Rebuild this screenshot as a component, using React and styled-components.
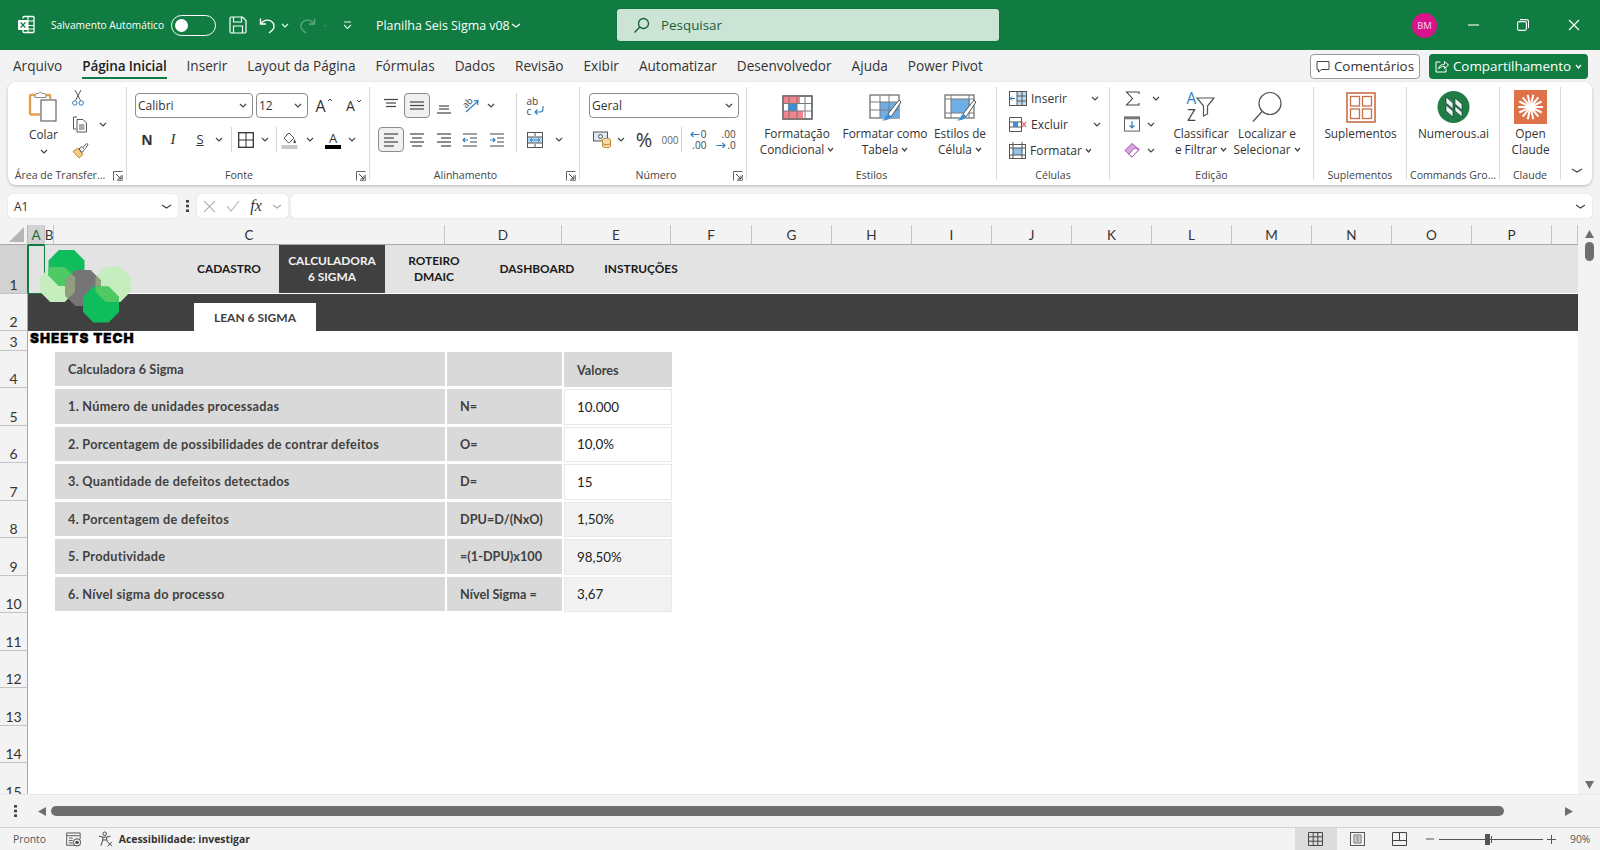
import styled, { createGlobalStyle } from 'styled-components';
import { Fragment } from 'react';

const GlobalStyle = createGlobalStyle`
  html, body { margin: 0; padding: 0; height: 100%; overflow: hidden; background: #f3f3f3; }
  body { font-family: "Open Sans", "Noto Sans", sans-serif; color: #333; }
  * { box-sizing: border-box; }
`;

const Page = styled.div`
  width: 1600px;
  height: 850px;
  display: flex;
  flex-direction: column;
  overflow: hidden;
`;

/* title bar */
const TitleBar = styled.div`
  height: 50px;
  background: #107c41;
  color: #fff;
  display: flex;
  align-items: center;
  flex: none;
`;
const Slot = styled.div`
  width: ${p => p.$w}px;
  flex: none;
  display: flex;
  align-items: center;
  justify-content: center;
  margin-left: ${p => p.$ml || 0}px;
`;
const AutoSave = styled.span`
  width: 120px;
  flex: none;
  font-size: 10.2px;
  white-space: nowrap;
`;
const Toggle = styled.div`
  width: 45px;
  height: 21px;
  flex: none;
  border: 1.5px solid #fff;
  border-radius: 11px;
  padding: 3px;
  display: flex;
  &::before {
    content: '';
    width: 13px;
    height: 13px;
    border-radius: 50%;
    background: #fff;
  }
`;
const DocName = styled.div`
  width: 131px;
  flex: none;
  font-size: 12.4px;
  white-space: nowrap;
`;
const SearchBox = styled.div`
  width: 382px;
  height: 32px;
  flex: none;
  background: #cce4d6;
  border-radius: 3px;
  display: flex;
  align-items: center;
  gap: 11px;
  padding-left: 16px;
  color: #1d5c3a;
  font-size: 13.4px;
  box-shadow: 0 0 1px rgba(0, 0, 0, 0.4);
`;
const Avatar = styled.div`
  width: 25px;
  height: 25px;
  flex: none;
  border-radius: 50%;
  background: #d9138c;
  color: #f7d3ea;
  font-size: 9.5px;
  display: flex;
  align-items: center;
  justify-content: center;
`;

/* tab row */
const TabRow = styled.div`
  height: 32px;
  flex: none;
  display: flex;
  align-items: center;
  padding: 0 12px 0 13px;
`;
const Tab = styled.div`
  margin: 0 20px 3px 0;
  height: 29px;
  padding-top: 4px;
  flex: none;
  display: flex;
  align-items: center;
  font-size: 13.6px;
  white-space: nowrap;
  font-weight: ${p => (p.$active ? 600 : 400)};
  letter-spacing: ${p => (p.$active ? '-0.15px' : '0')};
  color: ${p => (p.$active ? '#222' : '#333')};
  border-bottom: 2px solid ${p => (p.$active ? '#107c41' : 'transparent')};
`;
const TabActions = styled.div`
  margin-left: auto;
  display: flex;
  gap: 9px;
`;
const CommentButton = styled.div`
  width: 110px;
  height: 25px;
  border: 1px solid #9a9a9a;
  border-radius: 4px;
  background: #fff;
  display: flex;
  align-items: center;
  justify-content: center;
  gap: 4px;
  font-size: 13.4px;
`;
const ShareButton = styled.div`
  width: 159px;
  height: 25px;
  border-radius: 4px;
  background: #107c41;
  color: #fff;
  display: flex;
  align-items: center;
  justify-content: center;
  gap: 4px;
  font-size: 13.4px;
`;

/* ribbon */
const Ribbon = styled.div`
  height: 103px;
  margin: 0 8px;
  flex: none;
  background: #fff;
  border-radius: 8px;
  box-shadow: 0 1px 3px rgba(0, 0, 0, 0.25);
  display: flex;
`;
const Group = styled.div`
  width: ${p => p.$w}px;
  flex: none;
  margin: 5px 0;
  padding-top: 6px;
  display: flex;
  flex-direction: column;
  border-right: ${p => (p.$last ? 'none' : '1px solid #dcdcdc')};
`;
const GroupBody = styled.div`
  flex: 1;
  min-height: 0;
  display: flex;
  padding-left: ${p => p.$pad || 0}px;
`;
const Stack = styled.div`
  display: flex;
  flex-direction: column;
  gap: ${p => p.$gap ?? 9}px;
  margin-top: ${p => p.$top || 0}px;
  margin-left: ${p => p.$left || 0}px;
`;
const ToolRow = styled.div`
  display: flex;
  align-items: center;
  height: ${p => p.$h || 25}px;
`;
const GroupLabel = styled.div`
  height: 18px;
  flex: none;
  margin-bottom: -4px;
  display: flex;
  align-items: center;
  justify-content: center;
  font-size: 10.6px;
  color: #444;
  white-space: nowrap;
  position: relative;
`;
const LabelText = styled.span`
  margin-right: ${p => p.$mr || 0}px;
`;
const Launcher = styled.span`
  position: absolute;
  right: 3px;
  top: 5px;
  display: flex;
`;
const CollapseSlot = styled.div`
  height: 18px;
  margin-bottom: 1px;
  display: flex;
  align-items: center;
  justify-content: center;
`;
const Select = styled.div`
  width: ${p => p.$w}px;
  height: 25px;
  flex: none;
  border: 1px solid #8c8c8c;
  border-radius: 4px;
  font-size: 12px;
  display: flex;
  align-items: center;
  justify-content: space-between;
  padding: 0 5px 0 2px;
  color: #333;
`;
const Pressed = styled.div`
  width: ${p => p.$w}px;
  height: 25px;
  flex: none;
  background: #f0f0f0;
  border: 1px solid #8c8c8c;
  border-radius: 4px;
  display: flex;
  align-items: center;
  justify-content: center;
`;
const BigButton = styled.div`
  width: ${p => p.$w}px;
  flex: none;
  margin-left: ${p => p.$ml || 0}px;
  display: flex;
  flex-direction: column;
  align-items: center;
  font-size: 11.8px;
  line-height: 16px;
  color: #333;
  white-space: nowrap;
  text-align: center;
`;
const BigIcon = styled.div`
  height: 32px;
  margin-top: -2px;
  display: flex;
  align-items: center;
  justify-content: center;
  flex: none;
`;
const PasteSlot = styled(BigIcon)`
  height: 33px;
  margin-top: -3px;
`;
const BigText = styled.div`
  margin-top: ${p => p.$top ?? 2}px;
  display: flex;
`;
const ChevronLine = styled.span`
  display: inline-flex;
  align-items: center;
  gap: 3px;
`;
const CellAction = styled.div`
  height: 26px;
  display: flex;
  align-items: center;
  font-size: 12px;
  white-space: nowrap;
`;
const CellName = styled.span`
  width: ${p => (p.$w ? `${p.$w}px` : 'auto')};
  margin: 0 ${p => (p.$w ? 0 : 3)}px 0 4px;
`;
const Mark = styled.span`
  font-family: ${p => (p.$serif ? '"Liberation Serif", serif' : '"Open Sans", sans-serif')};
  font-weight: ${p => (p.$bold ? 700 : 400)};
  font-style: ${p => (p.$italic ? 'italic' : 'normal')};
  font-size: ${p => p.$size || 14}px;
  text-decoration: ${p => (p.$under ? 'underline' : 'none')};
  color: ${p => p.$color || '#333'};
  line-height: 1;
`;
const VSep = styled.div`
  width: 1px;
  height: ${p => p.$h || 25}px;
  background: #d4d4d4;
  flex: none;
  margin: 0 ${p => p.$mr || 0}px 0 ${p => p.$ml || 0}px;
`;
const GrowMark = styled.div`
  display: flex;
  align-items: flex-start;
  gap: 1px;
`;
const ColorMark = styled.div`
  width: 16px;
  display: flex;
  flex-direction: column;
  align-items: center;
  font-size: 13px;
  line-height: 14px;
  color: #333;
  &::after {
    content: '';
    width: 16px;
    height: 4px;
    background: #000;
  }
`;
const Mini = styled.div`
  display: flex;
  flex-direction: column;
  align-items: ${p => p.$align || 'flex-start'};
  gap: ${p => p.$gap || 0}px;
  font-size: ${p => p.$size || 10}px;
  line-height: ${p => p.$lh || 10}px;
  color: #444;
`;
const MiniLine = styled.div`
  display: flex;
  align-items: center;
  gap: 1px;
`;
const Blue = styled.span`
  color: #2f7fc1;
`;
const TiltMark = styled.span`
  display: block;
  font-size: 9px;
  line-height: 9px;
  color: #444;
  transform: rotate(-45deg);
  margin-right: -7px;
  margin-bottom: 6px;
`;
const WrapBox = styled.div`
  position: relative;
  width: 17px;
  height: 20px;
`;
const WrapArrow = styled.span`
  position: absolute;
  right: 0;
  bottom: 1px;
  display: flex;
`;
const SortBox = styled.div`
  display: flex;
  align-items: center;
`;
const SortLetters = styled.div`
  display: flex;
  flex-direction: column;
  font-size: 15.5px;
  line-height: 17px;
  color: #444;
`;

/* formula bar */
const FormulaBar = styled.div`
  height: 24px;
  margin: 9px 8px 7px;
  flex: none;
  display: flex;
  align-items: stretch;
`;
const InputBox = styled.div`
  background: #fff;
  border-radius: 4px;
  box-shadow: 0 0 1px rgba(0, 0, 0, 0.3);
  display: flex;
  align-items: center;
  font-size: 12px;
  width: ${p => (p.$w ? `${p.$w}px` : 'auto')};
  flex: ${p => (p.$w ? 'none' : 1)};
  padding: 0 6px;
  justify-content: space-between;
`;
const FxIcons = styled.div`
  display: flex;
  align-items: center;
  justify-content: space-between;
  width: 100%;
`;

/* sheet */
const SheetArea = styled.div`
  height: 569px;
  flex: none;
  display: flex;
  overflow: hidden;
`;
const SheetGrid = styled.div`
  width: 1578px;
  flex: none;
  position: relative;
  background: #fff;
  display: grid;
  grid-template-columns: 28px 17px 9px 391px 117px 109px 81px repeat(10, 80px) 26px;
  grid-template-rows: 20px 49px 37px 20px 37px repeat(11, 37.5px);
  overflow: hidden;
`;
const Corner = styled.div`
  grid-column: 1;
  grid-row: 1;
  background: #f3f3f3;
  border-right: 1px solid #b8b8b8;
  border-bottom: 1px solid #a8a8a8;
  display: flex;
  align-items: flex-end;
  justify-content: flex-end;
  padding: 2px 3px;
`;
const ColHead = styled.div`
  grid-row: 1;
  grid-column: ${p => p.$col};
  background: ${p => (p.$selected ? '#d2d2d2' : '#f3f3f3')};
  border-right: 1px solid #c4c4c4;
  border-bottom: 1px solid ${p => (p.$selected ? '#107c41' : '#a8a8a8')};
  display: flex;
  align-items: center;
  justify-content: center;
  font-family: Lato, sans-serif;
  font-size: 13.5px;
  color: ${p => (p.$selected ? '#17693c' : '#333')};
`;
const RowHead = styled.div`
  grid-column: 1;
  grid-row: ${p => p.$row};
  background: ${p => (p.$selected ? '#d2d2d2' : '#f3f3f3')};
  border-right: 1px solid ${p => (p.$selected ? '#107c41' : '#a8a8a8')};
  border-bottom: 1px solid #c4c4c4;
  display: flex;
  align-items: flex-end;
  justify-content: center;
  font-family: Lato, sans-serif;
  font-size: 14px;
  line-height: 16px;
  color: #333;
`;
const NavBand = styled.div`
  grid-column: 2 / -1;
  grid-row: 2;
  background: #e3e3e3;
  border-bottom: 1px solid #fff;
  display: flex;
  padding-left: 151px;
`;
const NavTab = styled.div`
  width: ${p => p.$w}px;
  flex: none;
  display: flex;
  align-items: center;
  justify-content: center;
  text-align: center;
  font-family: Lato, sans-serif;
  font-weight: 700;
  font-size: 11.9px;
  line-height: 16.5px;
  background: ${p => (p.$active ? '#404040' : 'transparent')};
  color: ${p => (p.$active ? '#f2f2f2' : '#1a1a1a')};
`;
const SubBand = styled.div`
  grid-column: 2 / -1;
  grid-row: 3;
  background: #404040;
  display: flex;
  align-items: flex-end;
  padding-left: 166px;
`;
const SubTab = styled.div`
  width: 122px;
  height: 28px;
  background: #fff;
  color: #404040;
  display: flex;
  align-items: center;
  justify-content: center;
  font-family: Lato, sans-serif;
  font-weight: 700;
  font-size: 12px;
`;
const SelectedCell = styled.div`
  grid-column: 2;
  grid-row: 2;
  border: 1.5px solid #107c41;
  z-index: 1;
`;
const Brand = styled.div`
  grid-column: 2 / 5;
  grid-row: 4;
  padding-left: 2px;
  font-family: Inter, sans-serif;
  font-weight: 900;
  font-size: 13.4px;
  line-height: 15px;
  letter-spacing: 1px;
  color: #000;
  -webkit-text-stroke: 0.4px #000;
  z-index: 2;
`;
const Logo = styled.svg`
  position: absolute;
  left: 0;
  top: 0;
  z-index: 2;
`;
const DataCell = styled.div`
  grid-row: ${p => p.$row};
  grid-column: ${p => p.$col};
  margin: ${p => (p.$col === 6 ? '1px -1px 1px 2px' : p.$col === 5 ? '1px 0 2px 2px' : '1px 0 2px 1px')};
  padding-left: ${p => p.$pad}px;
  display: flex;
  align-items: center;
  font-family: Lato, sans-serif;
  font-weight: ${p => (p.$value ? 400 : 700)};
  font-size: ${p => (p.$value ? 13.4 : 12.7)}px;
  letter-spacing: ${p => p.$track || 0}px;
  color: ${p => (p.$value ? '#222' : '#404040')};
  white-space: nowrap;
  background: ${p => p.$bg};
  border: ${p => (p.$framed ? '1px solid #e8e8e8' : 'none')};
`;
const VScroll = styled.div`
  flex: 1;
  background: #f3f3f3;
  display: flex;
  flex-direction: column;
  align-items: center;
  padding-top: 5px;
`;
const VThumb = styled.div`
  width: 9px;
  height: 19px;
  margin-top: 3px;
  background: #6e6e6e;
  border-radius: 5px;
`;
const DownArrow = styled.div`
  margin-top: auto;
  margin-bottom: 4px;
  display: flex;
`;
const HScrollBar = styled.div`
  height: 33px;
  flex: none;
  display: flex;
  align-items: center;
  border-top: 1px solid #e8e8e8;
`;
const HThumb = styled.div`
  width: 1453px;
  height: 10px;
  margin-left: -3px;
  background: #6e6e6e;
  border-radius: 5px;
  flex: none;
`;

/* status bar */
const StatusBar = styled.div`
  height: 23px;
  flex: none;
  border-top: 1px solid #d4d4d4;
  display: flex;
  align-items: center;
  font-size: 10.4px;
  color: #444;
`;
const StatusText = styled.span`
  font-weight: ${p => (p.$bold ? 700 : 400)};
  color: ${p => (p.$bold ? '#333' : '#555')};
  white-space: nowrap;
  width: ${p => (p.$w ? `${p.$w}px` : 'auto')};
  flex: none;
`;
const ViewButton = styled.div`
  width: ${p => p.$w}px;
  height: 22px;
  flex: none;
  display: flex;
  align-items: center;
  justify-content: center;
  background: ${p => (p.$active ? '#dcdcdc' : 'transparent')};
`;
const ZoomTrack = styled.div`
  width: 104px;
  height: 1px;
  flex: none;
  background: #555;
  position: relative;
`;
const ZoomThumb = styled.div`
  position: absolute;
  left: 46px;
  top: -5px;
  width: 5px;
  height: 11px;
  background: #555;
`;
const ZoomTick = styled.div`
  position: absolute;
  left: 52px;
  top: -3px;
  width: 1px;
  height: 7px;
  background: #555;
`;

/* icons */
const Svg = ({ w, h, children, ...rest }) => (
  <svg width={w} height={h} viewBox={`0 0 ${w} ${h}`} fill="none" {...rest}>{children}</svg>
);
const Chev = ({ color = '#444', w = 8 }) => (
  <Svg w={w} h={5}><path d={`M1 1l${w / 2 - 1} 3 ${w / 2 - 1}-3`} stroke={color} strokeWidth="1.2" /></Svg>
);
const LauncherIcon = () => (
  <Svg w={10} h={10}>
    <path d="M0.5 9.5v-9h9" stroke="#666" />
    <path d="M3 3l5 5M8 4.5V8H4.5" stroke="#3d3d3d" />
    <path d="M4 9.5h5.5V4" stroke="#888" />
  </Svg>
);
const ExcelIcon = () => (
  <Svg w={18} h={20}>
    <path d="M6 3.5V2.5a1 1 0 0 1 1-1h9a1 1 0 0 1 1 1v14a1 1 0 0 1-1 1H7a1 1 0 0 1-1-1v-2" stroke="#fff" strokeWidth="1.3" />
    <path d="M11 1.5v16M6 6h11M11 10.5h6M11 14h6" stroke="#fff" strokeWidth="1.1" />
    <rect x="1" y="5" width="10" height="10" rx="1" fill="#fff" />
    <path d="M3.6 7.4l4.8 5.2M8.4 7.4l-4.8 5.2" stroke="#107c41" strokeWidth="1.4" />
  </Svg>
);
const SaveIcon = () => (
  <Svg w={18} h={18}>
    <path d="M1 2.2A1.2 1.2 0 0 1 2.2 1h11.3L17 4.5v11.3a1.2 1.2 0 0 1-1.2 1.2H2.2A1.2 1.2 0 0 1 1 15.8z" stroke="#fff" strokeWidth="1.2" />
    <path d="M4.5 1v5h8V1M4.5 17v-7h9v7" stroke="#fff" strokeWidth="1.2" />
  </Svg>
);
const UndoIcon = ({ color = '#fff', flip }) => (
  <Svg w={17} h={17}>
    <g transform={flip ? 'translate(17 0) scale(-1 1)' : undefined}>
      <path d="M1.5 1.5v5.5h5.5" stroke={color} strokeWidth="1.4" />
      <path d="M1.8 6.8C4 3.5 8.5 2 12 4c3.5 2.2 4 6.5 1.5 9l-3.5 3" stroke={color} strokeWidth="1.4" />
    </g>
  </Svg>
);
const CustomizeIcon = () => (
  <Svg w={9} h={9}>
    <path d="M1 1h7" stroke="#dfe" strokeWidth="1" />
    <path d="M1 4l3.5 3.5L8 4" stroke="#dfe" strokeWidth="1.1" />
  </Svg>
);
const SearchIcon = () => (
  <Svg w={17} h={17}>
    <circle cx="10.5" cy="6.5" r="5" stroke="#1d5c3a" strokeWidth="1.3" />
    <path d="M6.8 10L1.5 15.5" stroke="#1d5c3a" strokeWidth="1.4" />
  </Svg>
);
const CommentIcon = () => (
  <Svg w={14} h={13}>
    <path d="M1 1.5h12v8H5.5L2.5 12V9.5H1z" stroke="#444" />
  </Svg>
);
const ShareIcon = () => (
  <Svg w={14} h={13}>
    <path d="M5.5 2H1v10h10V8.5" stroke="#fff" />
    <path d="M3.5 9C4 6 6.5 4.2 9.5 4.2V1.5L13.5 5l-4 3.5V6.3C7 6.3 5 7 3.5 9z" stroke="#fff" />
  </Svg>
);
const PasteIcon = () => (
  <Svg w={32} h={33}>
    <path d="M12 24.5H3.2A1.2 1.2 0 0 1 2 23.3V6.2A1.2 1.2 0 0 1 3.2 5H21a1.2 1.2 0 0 1 1.2 1.2V9" stroke="#e2a04c" strokeWidth="2.4" />
    <path d="M7 5l1-1.5h2.5C11 1.5 13.5 1.5 14 3.5h2.5L18 5v2.5H7z" fill="#fff" stroke="#8a8a8a" />
    <rect x="13" y="10" width="15" height="21" fill="#fff" stroke="#666" strokeWidth="1.2" />
  </Svg>
);
const CutIcon = () => (
  <Svg w={12} h={18}>
    <path d="M3 1l5.5 10.5M9 1L3.5 11.5" stroke="#555" />
    <circle cx="2.8" cy="14" r="2.2" stroke="#3b78b5" />
    <circle cx="9.2" cy="14" r="2.2" stroke="#3b78b5" />
  </Svg>
);
const CopyIcon = () => (
  <Svg w={16} h={17}>
    <path d="M5 1H1.5v12H4" stroke="#555" />
    <path d="M5 3.5h6l3.5 3.5V16H5z" stroke="#555" />
    <path d="M7 9h5.5M7 11h5.5M7 13h5.5" stroke="#555" />
  </Svg>
);
const BrushIcon = () => (
  <Svg w={17} h={17}>
    <path d="M1 9.5l5-3.5 5 6.5-4 3.5z" fill="#f2c987" stroke="#c98a30" />
    <path d="M7 7l3-2.5 2.5 3-2.5 3z" stroke="#555" />
    <path d="M11.5 5l3-3.5 1.5 1-2.5 4" stroke="#555" />
  </Svg>
);
const SmallCaret = ({ down }) => (
  <Svg w={6} h={4}><path d={down ? 'M1 1l2 2 2-2' : 'M1 3l2-2 2 2'} stroke="#444" /></Svg>
);
const BorderIcon = () => (
  <Svg w={16} h={16}>
    <rect x="0.7" y="0.7" width="14.6" height="14.6" stroke="#333" strokeWidth="1.3" />
    <path d="M8 1v14M1 8h14" stroke="#333" />
  </Svg>
);
const FillIcon = () => (
  <Svg w={17} h={18}>
    <path d="M3 7l5-5 5 5-4.5 4.5a1 1 0 0 1-1.2 0z" stroke="#555" />
    <path d="M8 2L5 4.5" stroke="#555" />
    <path d="M13.5 8l1.5 3a1.2 1.2 0 0 1-2.6 0z" fill="#555" />
    <rect x="0.5" y="14" width="16" height="4" fill="#c8c8c8" />
  </Svg>
);
const Lines = ({ rows, w = 16 }) => (
  <Svg w={w} h={16}>
    {rows.map((r, i) => (
      <path key={i} d={`M${r[0]} ${r[2]}H${r[1]}`} stroke="#444" strokeWidth="1.2" />
    ))}
  </Svg>
);
const AlignTop = () => <Lines rows={[[1, 15, 1.5], [3, 13, 5], [3, 13, 8.5]]} />;
const AlignMid = () => <Lines rows={[[1, 15, 4], [1, 15, 7.5], [1, 15, 11]]} />;
const AlignBot = () => <Lines rows={[[3, 13, 8], [3, 13, 11], [1, 15, 15]]} />;
const AlignLeft = () => <Lines rows={[[1, 15, 2], [1, 11, 6], [1, 15, 10], [1, 11, 14]]} />;
const AlignCenter = () => <Lines rows={[[1, 15, 2], [3, 13, 6], [1, 15, 10], [3, 13, 14]]} />;
const AlignRight = () => <Lines rows={[[1, 15, 2], [5, 15, 6], [1, 15, 10], [5, 15, 14]]} />;
const IndentIcon = ({ back }) => (
  <Svg w={16} h={16}>
    <path d="M1 2h14M1 14h14M8 6h7M8 10h7" stroke="#444" strokeWidth="1.1" />
    <path d={back ? 'M6 8H1M3 5.8L1 8l2 2.2' : 'M1 8h5M4 5.8L6 8l-2 2.2'} stroke="#2f7fc1" strokeWidth="1.2" />
  </Svg>
);
const OrientArrow = () => (
  <Svg w={14} h={14}>
    <path d="M1 13L12.5 2.5M8.5 2l4.5-.5-.5 4.5" stroke="#2f7fc1" strokeWidth="1.2" />
  </Svg>
);
const WrapReturn = () => (
  <Svg w={11} h={9}>
    <path d="M10 0v3a3 3 0 0 1-3 3H2M4.5 3.5L2 6l2.5 2.5" stroke="#2f7fc1" strokeWidth="1.1" />
  </Svg>
);
const MergeIcon = () => (
  <Svg w={16} h={16}>
    <rect x="0.5" y="0.5" width="15" height="15" stroke="#555" />
    <rect x="1" y="5" width="14" height="6" fill="#bcdcf5" />
    <path d="M1 5h14M1 11h14M8 1v3M8 12v3" stroke="#555" />
    <path d="M3 8h10M5 6.2L3 8l2 1.8M11 6.2L13 8l-2 1.8" stroke="#2f7fc1" />
  </Svg>
);
const CurrencyIcon = () => (
  <Svg w={19} h={17}>
    <rect x="0.5" y="1" width="14" height="9" fill="#dfe9f2" stroke="#555" />
    <circle cx="7.5" cy="5.5" r="2" stroke="#555" />
    <ellipse cx="13.5" cy="9" rx="4" ry="1.8" fill="#f6d9a8" stroke="#c58a34" />
    <path d="M9.5 9v6c0 1 1.8 1.7 4 1.7s4-.7 4-1.7V9" fill="#f6d9a8" stroke="#c58a34" />
    <path d="M9.5 12c0 1 1.8 1.7 4 1.7s4-.7 4-1.7" stroke="#c58a34" />
  </Svg>
);
const DecArrow = ({ left }) => (
  <Svg w={10} h={7}>
    <path d={left ? 'M9.5 3.5H1M3.5 1L1 3.5 3.5 6' : 'M0.5 3.5H9M6.5 1L9 3.5 6.5 6'} stroke="#2f7fc1" strokeWidth="1.1" />
  </Svg>
);
const CondIcon = () => (
  <Svg w={31} h={25}>
    <rect x="1" y="1" width="29" height="23" fill="#fff" stroke="#555" strokeWidth="1.2" />
    <rect x="1" y="1" width="17" height="7" fill="#f2838f" />
    <rect x="1" y="16" width="20" height="8" fill="#f2838f" />
    <rect x="6" y="9" width="9" height="7" fill="#3f8fd6" />
    <path d="M1 8.5h29M1 16h29M7 1v23M15 1v23M23 1v23" stroke="#7a7a7a" />
    <rect x="1" y="1" width="29" height="23" stroke="#666" strokeWidth="1.2" />
  </Svg>
);
const Brush2 = () => (
  <>
    <path d="M19 20L30 6l2 2-10 15z" fill="#fff" stroke="#555" />
    <path d="M12 26c3 0 4-1 5-4 1-2 3-2 4-1s1 3-1 4-5 2-8 1z" fill="#3f8fd6" />
  </>
);
const TableIcon = () => (
  <Svg w={33} h={27}>
    <rect x="1" y="1" width="29" height="23" fill="#fff" stroke="#666" strokeWidth="1.2" />
    <rect x="11" y="8" width="19" height="16" fill="#6eaee6" />
    <path d="M1 8h29M1 16h29M11 1v23M20 1v23" stroke="#7a7a7a" />
    <Brush2 />
  </Svg>
);
const StyleIcon = () => (
  <Svg w={33} h={27}>
    <rect x="1" y="1" width="29" height="23" fill="#fff" stroke="#666" strokeWidth="1.2" />
    <rect x="7" y="5" width="19" height="14" fill="#6eaee6" />
    <path d="M1 5h29M1 19h29M7 1v23M25 1v23" stroke="#7a7a7a" />
    <Brush2 />
  </Svg>
);
const CellInsert = () => (
  <Svg w={18} h={15}>
    <rect x="0.5" y="0.5" width="17" height="14" fill="#fff" stroke="#555" />
    <rect x="8" y="1" width="9" height="13" fill="#bcdcf5" />
    <path d="M8 1v13M13 1v13M8 5h10M8 10h10" stroke="#555" />
    <path d="M6 7.5H1M3 5.5l-2 2 2 2" stroke="#2f7fc1" />
  </Svg>
);
const CellDelete = () => (
  <Svg w={18} h={15}>
    <path d="M0.5 0.5h12v14h-12zM0.5 5h12M0.5 10h12" stroke="#555" />
    <rect x="4" y="5" width="5" height="5" fill="#3f8fd6" />
    <path d="M13 5l4 5M17 5l-4 5" stroke="#d9534f" strokeWidth="1.2" />
  </Svg>
);
const CellFormat = () => (
  <Svg w={17} h={17}>
    <rect x="0.5" y="2.5" width="16" height="14" fill="#fff" stroke="#555" />
    <rect x="4" y="6" width="9" height="7" fill="#8ec3ee" />
    <path d="M4 0v17M13 0v17M0 6h17M0 13h17" stroke="#555" />
  </Svg>
);
const SigmaIcon = () => (
  <Svg w={15} h={15}>
    <path d="M14 3V1H1.5l6 6.5-6 6.5H14v-2" stroke="#444" strokeWidth="1.1" />
  </Svg>
);
const FillDown = () => (
  <Svg w={17} h={16}>
    <rect x="0.5" y="0.5" width="16" height="15" fill="#fff" stroke="#555" />
    <rect x="0.5" y="0.5" width="16" height="2.5" fill="#777" />
    <path d="M8.5 5v7M6 9.5l2.5 2.5L11 9.5" stroke="#2f7fc1" strokeWidth="1.3" />
  </Svg>
);
const EraserIcon = () => (
  <Svg w={17} h={16}>
    <path d="M1 8.5L8.5 1l7.5 6.5-7.5 8z" fill="#d9a5e0" stroke="#a44cb5" />
    <path d="M5 12.5L11 6l5 1.5-7.5 8z" fill="#fff" stroke="#a44cb5" />
  </Svg>
);
const Funnel = () => (
  <Svg w={19} h={20}>
    <path d="M1 1h17l-6.5 8v8l-4 2V9z" stroke="#555" strokeWidth="1.2" />
  </Svg>
);
const FindIcon = () => (
  <Svg w={32} h={32}>
    <circle cx="19" cy="12.5" r="11" stroke="#555" strokeWidth="1.2" />
    <path d="M11 20.5L2 30.5" stroke="#555" strokeWidth="1.3" />
  </Svg>
);
const AddinIcon = () => (
  <Svg w={30} h={31}>
    <rect x="1" y="1" width="28" height="29" stroke="#c96f4a" strokeWidth="1.6" />
    <rect x="4.5" y="4.5" width="9" height="9.5" stroke="#c96f4a" strokeWidth="1.3" />
    <rect x="16.5" y="4.5" width="9" height="9.5" stroke="#c96f4a" strokeWidth="1.3" />
    <rect x="4.5" y="17" width="9" height="9.5" stroke="#c96f4a" strokeWidth="1.3" />
    <rect x="16.5" y="17" width="9" height="9.5" stroke="#c96f4a" strokeWidth="1.3" />
  </Svg>
);
const NumerousIcon = () => (
  <Svg w={33} h={34}>
    <circle cx="16.5" cy="17" r="16" fill="#1f7d45" />
    <path d="M9 7l7 6v6L9 13zM18 8l7 6v6l-7-6zM9 15l7 6v6l-7-6zM18 16l7 6v5l-7-6z" fill="#e8f4ec" stroke="#123" strokeWidth="0.6" />
  </Svg>
);
const ClaudeIcon = () => (
  <Svg w={33} h={34}>
    <rect width="33" height="34" fill="#df7149" />
    {[0, 26, 51, 77, 103, 129, 154].map(a => (
      <path key={a} d="M4 17h25" stroke="#fff" strokeWidth="2" transform={`rotate(${a} 16.5 17)`} />
    ))}
  </Svg>
);
const XMark = () => (
  <Svg w={13} h={13}><path d="M1 1l11 11M12 1L1 12" stroke="#b5b5b5" strokeWidth="1.1" /></Svg>
);
const CheckMark = () => (
  <Svg w={14} h={12}><path d="M1 6l4 5L13 1" stroke="#b5b5b5" strokeWidth="1.1" /></Svg>
);
const Dots = () => (
  <Svg w={3} h={12}>
    <rect width="3" height="2.6" fill="#444" />
    <rect y="4.7" width="3" height="2.6" fill="#444" />
    <rect y="9.4" width="3" height="2.6" fill="#444" />
  </Svg>
);
const Tri = ({ dir, color = '#6e6e6e' }) => {
  const d = {
    up: 'M0 8L4.5 0 9 8z',
    down: 'M0 0h9L4.5 8z',
    left: 'M8 0v9L0 4.5z',
    right: 'M0 0v9l8-4.5z',
  }[dir];
  return <Svg w={9} h={9}><path d={d} fill={color} /></Svg>;
};
const MacroIcon = () => (
  <Svg w={16} h={15}>
    <path d="M9 13.5H0.7V0.7h14V7" stroke="#555" />
    <path d="M1 3.5h13M3 6h4M3 8.5h4M3 11h4" stroke="#555" />
    <circle cx="11.5" cy="10.5" r="3.8" stroke="#444" />
    <circle cx="11.5" cy="10.5" r="1.8" fill="#444" />
  </Svg>
);
const AccessIcon = () => (
  <Svg w={16} h={16}>
    <circle cx="7" cy="2.5" r="1.8" stroke="#444" />
    <path d="M1 5l4 1h4l4-1M5 6v3l-2 6M9 6v3l1 2M5 9h4" stroke="#444" />
    <path d="M10 11l4.5 4.5M14.5 11L10 15.5" stroke="#444" />
  </Svg>
);
const NormalView = () => (
  <Svg w={15} h={14}>
    <path d="M0.5 0.5h14v13H0.5zM5.2 0.5v13M9.8 0.5v13M0.5 4.8h14M0.5 9.2h14" stroke="#444" />
  </Svg>
);
const PageView = () => (
  <Svg w={15} h={14}>
    <rect x="0.5" y="0.5" width="14" height="13" stroke="#555" />
    <path d="M4 3h7v8H4zM5.5 5h4M5.5 7h4M5.5 9h4" stroke="#666" />
  </Svg>
);
const BreakView = () => (
  <Svg w={15} h={14}>
    <path d="M0.5 13.5V0.5h14v13M0.5 8.5h14M7.5 0.5v8" stroke="#444" />
    <path d="M0.5 13.5h14" stroke="#444" />
  </Svg>
);

const octagon = (cx, cy, r) => {
  const a = r * 0.42;
  return [
    [cx - a, cy - r], [cx + a, cy - r], [cx + r, cy - a], [cx + r, cy + a],
    [cx + a, cy + r], [cx - a, cy + r], [cx - r, cy + a], [cx - r, cy - a],
  ].map(p => p.join(',')).join(' ');
};

const BrandLogo = () => {
  const topGreen = octagon(66.5, 43, 18);
  const lowGreen = octagon(101, 79.5, 18);
  const leftLight = octagon(57.5, 59.5, 17.5);
  const rightLight = octagon(113, 59.5, 17.5);
  const gray = octagon(83, 63, 18);
  return (
    <Logo width="140" height="106" viewBox="0 0 140 106">
      <defs>
        <clipPath id="clipTop"><polygon points={topGreen} /></clipPath>
        <clipPath id="clipLow"><polygon points={lowGreen} /></clipPath>
        <clipPath id="clipGray"><polygon points={gray} /></clipPath>
      </defs>
      <polygon points={leftLight} fill="#c6edbd" />
      <polygon points={rightLight} fill="#c6edbd" />
      <polygon points={topGreen} fill="#0fbd5c" />
      <polygon points={leftLight} fill="#4fc963" clipPath="url(#clipTop)" />
      <polygon points={gray} fill="#757575" />
      <polygon points={leftLight} fill="#8f9f7f" clipPath="url(#clipGray)" />
      <polygon points={rightLight} fill="#8f9f7f" clipPath="url(#clipGray)" />
      <polygon points={lowGreen} fill="#0fbd5c" />
      <polygon points={rightLight} fill="#4fc963" clipPath="url(#clipLow)" />
    </Logo>
  );
};

const TABS = ['Arquivo', 'Página Inicial', 'Inserir', 'Layout da Página', 'Fórmulas', 'Dados', 'Revisão', 'Exibir', 'Automatizar', 'Desenvolvedor', 'Ajuda', 'Power Pivot'];
const COLS = ['A', 'B', 'C', 'D', 'E', 'F', 'G', 'H', 'I', 'J', 'K', 'L', 'M', 'N', 'O', 'P'];
const ROWS = [
  ['Calculadora 6 Sigma', '', 'Valores'],
  ['1. Número de unidades processadas', 'N=', '10.000'],
  ['2. Porcentagem de possibilidades de contrar defeitos', 'O=', '10,0%'],
  ['3. Quantidade de defeitos detectados', 'D=', '15'],
  ['4. Porcentagem de defeitos', 'DPU=D/(NxO)', '1,50%'],
  ['5. Produtividade', '=(1-DPU)x100', '98,50%'],
  ['6. Nível sigma do processo', 'Nível Sigma =', '3,67'],
];

function RibbonBar() {
  return (
    <Ribbon>
      <Group $w={119}>
        <GroupBody>
          <BigButton $w={71}>
            <PasteSlot><PasteIcon /></PasteSlot>
            <BigText $top={3}>Colar</BigText>
            <BigText $top={7}><Chev /></BigText>
          </BigButton>
          <Stack $gap={4} $top={-6} $left={-7}>
            <ToolRow $h={22}><CutIcon /></ToolRow>
            <ToolRow $h={22}><CopyIcon /><Slot $w={30}><Chev /></Slot></ToolRow>
            <ToolRow $h={22}><BrushIcon /></ToolRow>
          </Stack>
        </GroupBody>
        <GroupLabel>
          <LabelText $mr={14}>Área de Transfer...</LabelText>
          <Launcher><LauncherIcon /></Launcher>
        </GroupLabel>
      </Group>

      <Group $w={243}>
        <GroupBody $pad={8}>
          <Stack>
            <ToolRow>
              <Select $w={118}>Calibri<Chev /></Select>
              <Slot $w={3} />
              <Select $w={52}>12<Chev /></Select>
              <Slot $w={32}><GrowMark><Mark $size={16}>A</Mark><SmallCaret /></GrowMark></Slot>
              <Slot $w={28}><GrowMark><Mark $size={14}>A</Mark><SmallCaret down /></GrowMark></Slot>
            </ToolRow>
            <ToolRow>
              <Slot $w={24}><Mark $bold $size={14}>N</Mark></Slot>
              <Slot $w={28}><Mark $italic $serif $size={15}>I</Mark></Slot>
              <Slot $w={26}><Mark $under $size={13}>S</Mark></Slot>
              <Slot $w={12}><Chev /></Slot>
              <Slot $w={12}><VSep /></Slot>
              <Slot $w={18}><BorderIcon /></Slot>
              <Slot $w={20}><Chev /></Slot>
              <Slot $w={2}><VSep /></Slot>
              <Slot $w={25}><FillIcon /></Slot>
              <Slot $w={16}><Chev /></Slot>
              <Slot $w={30}><ColorMark>A</ColorMark></Slot>
              <Slot $w={8}><Chev /></Slot>
            </ToolRow>
          </Stack>
        </GroupBody>
        <GroupLabel>
          <LabelText $mr={18}>Fonte</LabelText>
          <Launcher><LauncherIcon /></Launcher>
        </GroupLabel>
      </Group>

      <Group $w={210}>
        <GroupBody $pad={8}>
          <Stack>
            <ToolRow>
              <Slot $w={26}><AlignTop /></Slot>
              <Pressed $w={26}><AlignMid /></Pressed>
              <Slot $w={27}><AlignBot /></Slot>
              <Slot $w={27}>
                <TiltMark>ab</TiltMark>
                <OrientArrow />
              </Slot>
              <Slot $w={14}><Chev /></Slot>
            </ToolRow>
            <ToolRow>
              <Pressed $w={26}><AlignLeft /></Pressed>
              <Slot $w={26}><AlignCenter /></Slot>
              <Slot $w={27}><AlignRight /></Slot>
              <Slot $w={26}><IndentIcon back /></Slot>
              <Slot $w={27}><IndentIcon /></Slot>
            </ToolRow>
          </Stack>
          <VSep $h={59} $ml={6} $mr={8} />
          <Stack>
            <ToolRow>
              <Slot $w={20}>
                <WrapBox>
                  <Mini $lh={10}><span>ab</span><span>c</span></Mini>
                  <WrapArrow><WrapReturn /></WrapArrow>
                </WrapBox>
              </Slot>
            </ToolRow>
            <ToolRow>
              <Slot $w={20}><MergeIcon /></Slot>
              <Slot $w={28}><Chev /></Slot>
            </ToolRow>
          </Stack>
        </GroupBody>
        <GroupLabel>
          <LabelText $mr={18}>Alinhamento</LabelText>
          <Launcher><LauncherIcon /></Launcher>
        </GroupLabel>
      </Group>

      <Group $w={167}>
        <GroupBody $pad={9}>
          <Stack>
            <ToolRow><Select $w={150}>Geral<Chev /></Select></ToolRow>
            <ToolRow>
              <Slot $w={26}><CurrencyIcon /></Slot>
              <Slot $w={12}><Chev /></Slot>
              <Slot $w={34}><Mark $size={20}>%</Mark></Slot>
              <Slot $w={18}><Mark $size={10} $color="#666">000</Mark></Slot>
              <Slot $w={4}><VSep /></Slot>
              <Slot $w={30}>
                <Mini $align="flex-end" $gap={1}>
                  <MiniLine><DecArrow left />0</MiniLine>
                  <MiniLine>.00</MiniLine>
                </Mini>
              </Slot>
              <Slot $w={26}>
                <Mini $align="flex-end" $gap={1}>
                  <MiniLine>.00</MiniLine>
                  <MiniLine><DecArrow />.0</MiniLine>
                </Mini>
              </Slot>
            </ToolRow>
          </Stack>
        </GroupBody>
        <GroupLabel>
          <LabelText $mr={14}>Número</LabelText>
          <Launcher><LauncherIcon /></Launcher>
        </GroupLabel>
      </Group>

      <Group $w={250}>
        <GroupBody $pad={6}>
          <BigButton $w={88}>
            <BigIcon><CondIcon /></BigIcon>
            <BigText>Formatação</BigText>
            <ChevronLine>Condicional <Chev w={7} /></ChevronLine>
          </BigButton>
          <BigButton $w={88}>
            <BigIcon><TableIcon /></BigIcon>
            <BigText>Formatar como</BigText>
            <ChevronLine>Tabela <Chev w={7} /></ChevronLine>
          </BigButton>
          <BigButton $w={62}>
            <BigIcon><StyleIcon /></BigIcon>
            <BigText>Estilos de</BigText>
            <ChevronLine>Célula <Chev w={7} /></ChevronLine>
          </BigButton>
        </GroupBody>
        <GroupLabel>Estilos</GroupLabel>
      </Group>

      <Group $w={113}>
        <GroupBody $pad={12}>
          <Stack $gap={0} $top={-8}>
            <CellAction><CellInsert /><CellName $w={60}>Inserir</CellName><Chev /></CellAction>
            <CellAction><CellDelete /><CellName $w={62}>Excluir</CellName><Chev /></CellAction>
            <CellAction><CellFormat /><CellName>Formatar</CellName><Chev w={7} /></CellAction>
          </Stack>
        </GroupBody>
        <GroupLabel>Células</GroupLabel>
      </Group>

      <Group $w={204}>
        <GroupBody $pad={14}>
          <Stack $gap={4} $top={-6}>
            <ToolRow $h={22}><Slot $w={16}><SigmaIcon /></Slot><Slot $w={32}><Chev /></Slot></ToolRow>
            <ToolRow $h={22}><Slot $w={16}><FillDown /></Slot><Slot $w={22}><Chev /></Slot></ToolRow>
            <ToolRow $h={22}><Slot $w={16}><EraserIcon /></Slot><Slot $w={22}><Chev /></Slot></ToolRow>
          </Stack>
          <BigButton $w={66} $ml={-4}>
            <BigIcon>
              <SortBox>
                <SortLetters><Blue>A</Blue><span>Z</span></SortLetters>
                <Funnel />
              </SortBox>
            </BigIcon>
            <BigText>Classificar</BigText>
            <ChevronLine>e Filtrar <Chev w={7} /></ChevronLine>
          </BigButton>
          <BigButton $w={66}>
            <BigIcon><FindIcon /></BigIcon>
            <BigText>Localizar e</BigText>
            <ChevronLine>Selecionar <Chev w={7} /></ChevronLine>
          </BigButton>
        </GroupBody>
        <GroupLabel>Edição</GroupLabel>
      </Group>

      <Group $w={93}>
        <GroupBody>
          <BigButton $w={93}>
            <BigIcon><AddinIcon /></BigIcon>
            <BigText>Suplementos</BigText>
          </BigButton>
        </GroupBody>
        <GroupLabel>Suplementos</GroupLabel>
      </Group>

      <Group $w={93}>
        <GroupBody>
          <BigButton $w={93}>
            <BigIcon><NumerousIcon /></BigIcon>
            <BigText>Numerous.ai</BigText>
          </BigButton>
        </GroupBody>
        <GroupLabel>Commands Gro...</GroupLabel>
      </Group>

      <Group $w={61}>
        <GroupBody>
          <BigButton $w={61}>
            <BigIcon><ClaudeIcon /></BigIcon>
            <BigText>Open</BigText>
            <div>Claude</div>
          </BigButton>
        </GroupBody>
        <GroupLabel>Claude</GroupLabel>
      </Group>

      <Group $w={31} $last>
        <GroupBody />
        <CollapseSlot><Chev w={12} /></CollapseSlot>
      </Group>
    </Ribbon>
  );
}

export default function App() {
  return (
    <Page>
      <GlobalStyle />
      <TitleBar>
        <Slot $w={51}><ExcelIcon /></Slot>
        <AutoSave>Salvamento Automático</AutoSave>
        <Toggle />
        <Slot $w={44}><SaveIcon /></Slot>
        <Slot $w={24} $ml={-5}><UndoIcon /></Slot>
        <Slot $w={12}><Chev color="#dfe" /></Slot>
        <Slot $w={32}><UndoIcon color="#5fa882" flip /></Slot>
        <Slot $w={4}><Chev color="#5fa882" /></Slot>
        <Slot $w={40}><CustomizeIcon /></Slot>
        <Slot $w={9} />
        <DocName>Planilha Seis Sigma v08</DocName>
        <Slot $w={18}><Chev color="#fff" w={10} /></Slot>
        <Slot $w={92} />
        <SearchBox><SearchIcon />Pesquisar</SearchBox>
        <Slot $w={413} />
        <Avatar>BM</Avatar>
        <Slot $w={24} />
        <Slot $w={25}><Svg w={11} h={2}><path d="M0 1h11" stroke="#fff" strokeWidth="1.1" /></Svg></Slot>
        <Slot $w={25} />
        <Slot $w={24}>
          <Svg w={12} h={12}>
            <rect x="0.6" y="2.6" width="8.8" height="8.8" rx="1.6" stroke="#fff" strokeWidth="1.1" />
            <path d="M3 0.6h6.5a2 2 0 0 1 2 2V9" stroke="#fff" strokeWidth="1.1" />
          </Svg>
        </Slot>
        <Slot $w={27} />
        <Slot $w={24}><Svg w={12} h={12}><path d="M1 1l10 10M11 1L1 11" stroke="#fff" strokeWidth="1.2" /></Svg></Slot>
      </TitleBar>

      <TabRow>
        {TABS.map(t => <Tab key={t} $active={t === 'Página Inicial'}>{t}</Tab>)}
        <TabActions>
          <CommentButton><CommentIcon />Comentários</CommentButton>
          <ShareButton><ShareIcon />Compartilhamento<Chev color="#fff" w={7} /></ShareButton>
        </TabActions>
      </TabRow>

      <RibbonBar />

      <FormulaBar>
        <InputBox $w={170}>A1<Chev w={11} /></InputBox>
        <Slot $w={19}><Dots /></Slot>
        <InputBox $w={91}>
          <FxIcons>
            <XMark /><CheckMark />
            <Mark $serif $italic $size={16}>fx</Mark>
            <Chev w={10} color="#aaa" />
          </FxIcons>
        </InputBox>
        <Slot $w={3} />
        <InputBox><span /><Chev w={11} /></InputBox>
      </FormulaBar>

      <SheetArea>
        <SheetGrid>
          <Corner><Svg w={15} h={15}><path d="M15 0v15H0z" fill="#b5b5b5" /></Svg></Corner>
          {COLS.map((c, i) => (
            <ColHead key={c} $col={i + 2} $selected={c === 'A'}>{c}</ColHead>
          ))}
          <ColHead $col={18} />
          {Array.from({ length: 15 }, (_, i) => (
            <RowHead key={i} $row={i + 2} $selected={i === 0}>{i + 1}</RowHead>
          ))}
          <NavBand>
            <NavTab $w={100}>CADASTRO</NavTab>
            <NavTab $w={106} $active>CALCULADORA<br />6 SIGMA</NavTab>
            <NavTab $w={98}>ROTEIRO<br />DMAIC</NavTab>
            <NavTab $w={108}>DASHBOARD</NavTab>
            <NavTab $w={100}>INSTRUÇÕES</NavTab>
          </NavBand>
          <SelectedCell />
          <SubBand><SubTab>LEAN 6 SIGMA</SubTab></SubBand>
          <Brand>SHEETS TECH</Brand>
          <BrandLogo />
          {ROWS.map((r, i) => {
            const row = i + 5;
            const head = i === 0;
            const valueBg = head ? '#d9d9d9' : i > 3 ? '#f2f2f2' : '#fff';
            return (
              <Fragment key={r[0]}>
                <DataCell $row={row} $col={4} $pad={13} $bg="#d9d9d9" $track={head ? 0.1 : 0.28}>{r[0]}</DataCell>
                <DataCell $row={row} $col={5} $pad={13} $bg="#d9d9d9">{r[1]}</DataCell>
                <DataCell $row={row} $col={6} $pad={head ? 13 : 12} $bg={valueBg} $value={!head} $framed={!head}>{r[2]}</DataCell>
              </Fragment>
            );
          })}
        </SheetGrid>
        <VScroll>
          <Tri dir="up" />
          <VThumb />
          <DownArrow><Tri dir="down" /></DownArrow>
        </VScroll>
      </SheetArea>

      <HScrollBar>
        <Slot $w={30}><Dots /></Slot>
        <Slot $w={24}><Tri dir="left" /></Slot>
        <HThumb />
        <Slot $w={130}><Tri dir="right" /></Slot>
      </HScrollBar>

      <StatusBar>
        <Slot $w={13} />
        <StatusText $w={53}>Pronto</StatusText>
        <MacroIcon />
        <Slot $w={17} />
        <AccessIcon />
        <Slot $w={5} />
        <StatusText $bold>Acessibilidade: investigar</StatusText>
        <Slot $w={1045} />
        <ViewButton $w={42} $active><NormalView /></ViewButton>
        <ViewButton $w={42}><PageView /></ViewButton>
        <ViewButton $w={42}><BreakView /></ViewButton>
        <Slot $w={18}><Svg w={8} h={2}><path d="M0 1h8" stroke="#555" /></Svg></Slot>
        <ZoomTrack><ZoomThumb /><ZoomTick /></ZoomTrack>
        <Slot $w={18}><Svg w={9} h={9}><path d="M0 4.5h9M4.5 0v9" stroke="#555" /></Svg></Slot>
        <Slot $w={9} />
        <StatusText $w={30}>90%</StatusText>
      </StatusBar>
    </Page>
  );
}
